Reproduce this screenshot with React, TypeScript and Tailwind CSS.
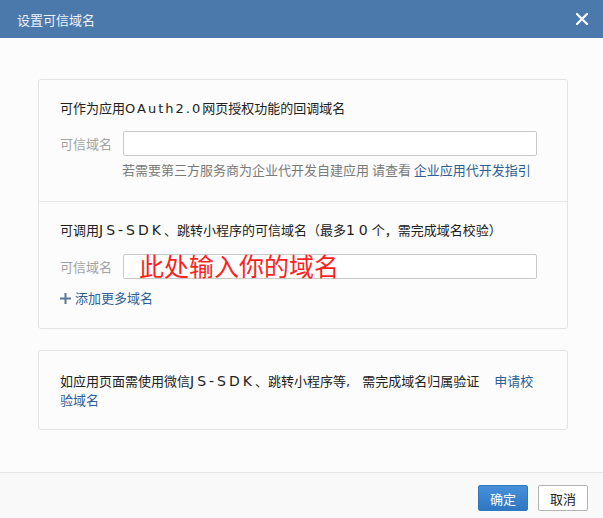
import React from "react";

function Latin({ children, cls = "" }: { children: React.ReactNode; cls?: string }) {
  return (
    <span
      className={"leading-none " + cls}
      style={{ fontFamily: '"DejaVu Sans", "Noto Sans CJK SC", sans-serif' }}
    >
      {children}
    </span>
  );
}

export default function App() {
  const font = { fontFamily: '"Noto Sans CJK SC", "Noto Sans", sans-serif' };
  return (
    <div
      className="w-[603px] h-[518px] flex flex-col bg-[#fcfcfc] overflow-hidden"
      style={font}
    >
      <div className="h-[38px] shrink-0 bg-[#4b79ab] flex items-center justify-between pl-[17px] pr-[15px]">
        <span className="text-[13px] text-[#eef2f8] leading-none">设置可信域名</span>
        <svg width="12" height="12" viewBox="0 0 12 12">
          <path d="M1 1 L11 11 M11 1 L1 11" stroke="#ffffff" strokeWidth="2.2" strokeLinecap="square" />
        </svg>
      </div>

      <div className="flex-1 pl-[38px] pr-[35px] pt-[41px]">
        <div className="border border-[#e3e3e3] rounded-[3px]">
          <div className="pl-[21px] pr-[30px] pt-[18px] pb-[21px]">
            <div className="h-[20px] text-[13px] leading-[20px] text-[#222] whitespace-nowrap">
              可作为应用<Latin cls="tracking-[2px]">OAuth2.0</Latin>网页授权功能的回调域名
            </div>
            <div className="flex items-center mt-[13px]">
              <span className="w-[63px] text-[13px] text-[#a3a3a3] leading-[20px]">可信域名</span>
              <div className="flex-1 h-[25px] border border-[#c9c9c9] rounded-[2px] bg-white" />
            </div>
            <div className="mt-[4px] pl-[62px] text-[13px] leading-[20px] text-[#7a7a7a] whitespace-nowrap">
              若需要第三方服务商为企业代开发自建应用 请查看{" "}
              <span className="text-[#2e5e96]">企业应用代开发指引</span>
            </div>
          </div>
          <div className="border-t border-[#e6e6e6] pl-[21px] pr-[30px] pt-[18px] pb-[20px]">
            <div className="h-[20px] text-[13px] leading-[20px] text-[#222] whitespace-nowrap">
              可调用<Latin cls="text-[14px] tracking-[3px]">JS-SDK</Latin>、跳转小程序的可信域名（最多<Latin cls="text-[14px] tracking-[4px]">10</Latin>个，需完成域名校验）
            </div>
            <div className="flex items-center mt-[14px]">
              <span className="w-[63px] text-[13px] text-[#a3a3a3] leading-[20px]">可信域名</span>
              <div className="flex-1 h-[25px] border border-[#c9c9c9] rounded-[2px] bg-white relative">
                <span className="absolute left-[15px] top-[-7px] text-[25px] leading-[34px] text-[#ff1f1f] whitespace-nowrap">
                  此处输入你的域名
                </span>
              </div>
            </div>
            <div className="mt-[9px] flex items-center text-[13px] leading-[20px] text-[#2e5e96]">
              <svg width="11" height="11" viewBox="0 0 11 11" className="mr-[4px]">
                <path d="M5.5 0 V11 M0 5.5 H11" stroke="#5b7894" strokeWidth="2" />
              </svg>
              添加更多域名
            </div>
          </div>
        </div>

        <div className="mt-[21px] border border-[#e3e3e3] rounded-[3px] pl-[21px] pr-[30px] pt-[20px] pb-[20px]">
          <div className="text-[13px] leading-[19px] text-[#222] whitespace-nowrap">
            <div className="h-[19px]">
              如应用页面需使用微信<Latin cls="text-[14px] tracking-[3px]">JS-SDK</Latin>、跳转小程序等<Latin cls="tracking-[4px]">, </Latin>需完成域名归属验证
              <span className="ml-[15px] text-[#2e5e96]">申请校</span>
            </div>
            <div className="h-[19px] text-[#2e5e96]">验域名</div>
          </div>
        </div>
      </div>

      <div className="h-[46px] shrink-0 border-t border-[#e4e4e4] bg-[#f9f9f9] flex justify-end items-start pt-[12px] pr-[15px] gap-[10px]">
        <button className="w-[50px] h-[26px] rounded-[2px] border border-[#2f78c0] bg-gradient-to-b from-[#4690da] to-[#2f77c0] text-white text-[13px] leading-none flex items-center justify-center">
          确定
        </button>
        <button className="w-[50px] h-[26px] rounded-[2px] border border-[#b3b3b3] bg-white text-[#222] text-[13px] leading-none flex items-center justify-center">
          取消
        </button>
      </div>
    </div>
  );
}
